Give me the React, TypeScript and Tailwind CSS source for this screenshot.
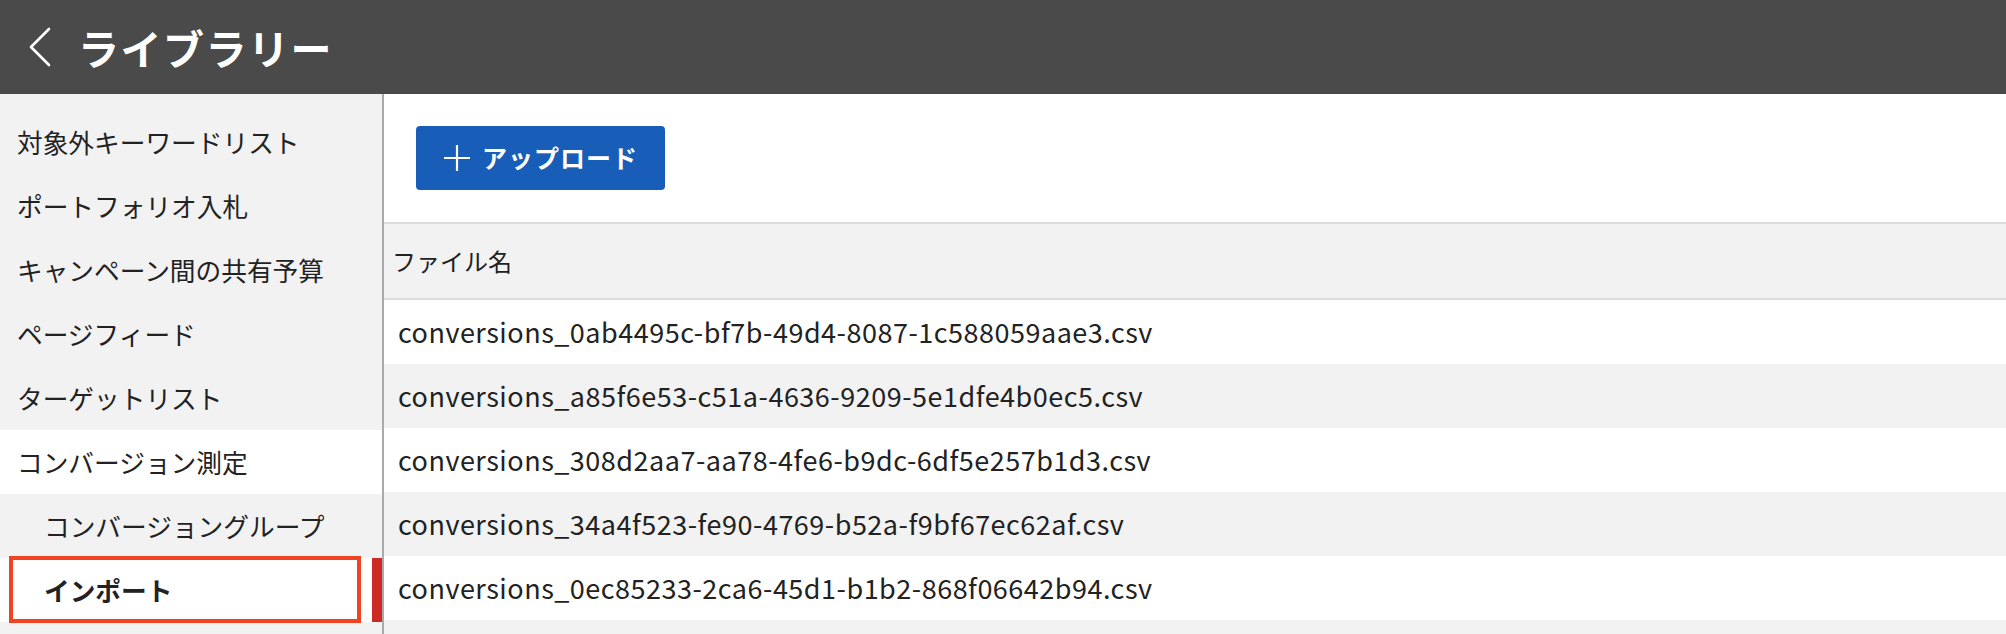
const files = [
  "conversions_0ab4495c-bf7b-49d4-8087-1c588059aae3.csv",
  "conversions_a85f6e53-c51a-4636-9209-5e1dfe4b0ec5.csv",
  "conversions_308d2aa7-aa78-4fe6-b9dc-6df5e257b1d3.csv",
  "conversions_34a4f523-fe90-4769-b52a-f9bf67ec62af.csv",
  "conversions_0ec85233-2ca6-45d1-b1b2-868f06642b94.csv",
  "",
];

const menu = [
  { label: "対象外キーワードリスト" },
  { label: "ポートフォリオ入札" },
  { label: "キャンペーン間の共有予算" },
  { label: "ページフィード" },
  { label: "ターゲットリスト" },
  { label: "コンバージョン測定", white: true },
  { label: "コンバージョングループ", sub: true },
  { label: "インポート", sub: true, active: true },
];

const App = () => {
  return (
    <div className="w-[2006px] h-[634px] overflow-hidden bg-white text-[#222] font-['Noto_Sans_CJK_JP','Noto_Sans',sans-serif]">
      {/* header */}
      <header className="h-[94px] bg-[#4a4a4a] flex items-center pl-[27px]">
        <svg className="w-[25px] h-[42px]" viewBox="0 0 25 42" fill="none" stroke="white" strokeWidth="2.6" strokeLinecap="round" strokeLinejoin="round">
          <path d="M22 3 L4 21 L22 39" />
        </svg>
        <h1 className="ml-[26px] text-white text-[41px] font-bold leading-none tracking-[1.5px]">ライブラリー</h1>
      </header>

      <div className="flex h-[540px]">
        {/* sidebar */}
        <aside className="w-[384px] shrink-0 bg-[#f2f2f2] border-r-2 border-[#aaa] pt-[16px]">
          <ul>
            {menu.map((m) => (
              <li
                key={m.label}
                className={`relative h-[64px] flex items-center text-[25.7px] ${m.sub ? "pl-[44px]" : "pl-[17px]"} ${m.white || m.active ? "bg-white" : ""} ${m.active ? "font-bold" : ""}`}
              >
                {m.label}
                {m.active && (
                  <>
                    <span className="absolute left-[9px] top-[-2px] w-[352px] h-[67px] border-[4px] border-[#f04323]" />
                    <span className="absolute right-0 top-0 w-[10px] h-full bg-[#cc2a24]" />
                  </>
                )}
              </li>
            ))}
          </ul>
        </aside>

        {/* main */}
        <main className="flex-1">
          <div className="h-[128px] flex items-center pl-[32px]">
            <button className="w-[249px] h-[64px] bg-[#185db8] rounded-[4px] flex items-center pl-[27px] text-white">
              <svg className="w-[28px] h-[28px]" viewBox="0 0 28 28" stroke="white" strokeWidth="2.2">
                <path d="M14 1 V27 M1 14 H27" />
              </svg>
              <span className="ml-[11px] text-[25px] font-bold tracking-[1px]">アップロード</span>
            </button>
          </div>

          <div className="h-[78px] bg-[#f2f2f2] border-y-2 border-[#dcdcdc] flex items-center pl-[8px] text-[24px]">
            ファイル名
          </div>

          {files.map((f, i) => (
            <div
              key={i}
              className={`h-[64px] flex items-center pl-[14px] text-[27px] tracking-[0.5px] ${i % 2 === 1 ? "bg-[#f2f2f2]" : "bg-white"}`}
            >
              {f}
            </div>
          ))}
        </main>
      </div>
    </div>
  );
};

export default App;
